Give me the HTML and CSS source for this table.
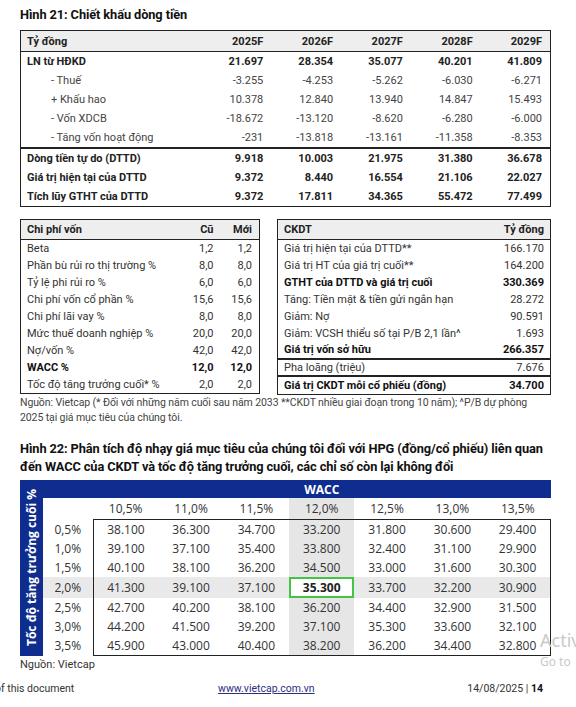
FILE: index.html
```html
<!DOCTYPE html>
<html>
<head>
<title>Hình 21 - Chiết khấu dòng tiền</title>
<link rel="stylesheet" href="styles.css">
</head>
<body>
<div class="page">
  <div class="fig-title">Hình 21: Chiết khấu dòng tiền</div>

  <table class="dcf">
    <colgroup><col class="c-name"><col><col><col><col><col></colgroup>
    <thead>
      <tr><th class="name">Tỷ đồng</th><th>2025F</th><th>2026F</th><th>2027F</th><th>2028F</th><th>2029F</th></tr>
    </thead>
    <tbody>
      <tr class="bold"><td class="name">LN từ HĐKD</td><td>21.697</td><td>28.354</td><td>35.077</td><td>40.201</td><td>41.809</td></tr>
      <tr class="sub"><td class="name">- Thuế</td><td>-3.255</td><td>-4.253</td><td>-5.262</td><td>-6.030</td><td>-6.271</td></tr>
      <tr class="sub"><td class="name">+ Khấu hao</td><td>10.378</td><td>12.840</td><td>13.940</td><td>14.847</td><td>15.493</td></tr>
      <tr class="sub"><td class="name">- Vốn XDCB</td><td>-18.672</td><td>-13.120</td><td>-8.620</td><td>-6.280</td><td>-6.000</td></tr>
      <tr class="sub"><td class="name">- Tăng vốn hoạt động</td><td>-231</td><td>-13.818</td><td>-13.161</td><td>-11.358</td><td>-8.353</td></tr>
      <tr class="bold rule-top"><td class="name">Dòng tiền tự do (DTTD)</td><td>9.918</td><td>10.003</td><td>21.975</td><td>31.380</td><td>36.678</td></tr>
      <tr class="bold"><td class="name">Giá trị hiện tại của DTTD</td><td>9.372</td><td>8.440</td><td>16.554</td><td>21.106</td><td>22.027</td></tr>
      <tr class="bold"><td class="name">Tích lũy GTHT của DTTD</td><td>9.372</td><td>17.811</td><td>34.365</td><td>55.472</td><td>77.499</td></tr>
    </tbody>
  </table>

  <div class="pair">
    <table class="small cap">
      <colgroup><col class="c-name"><col class="c-num"><col class="c-num"></colgroup>
      <thead>
        <tr><th class="name">Chi phí vốn</th><th>Cũ</th><th>Mới</th></tr>
      </thead>
      <tbody>
        <tr><td class="name">Beta</td><td>1,2</td><td>1,2</td></tr>
        <tr><td class="name">Phần bù rủi ro thị trường %</td><td>8,0</td><td>8,0</td></tr>
        <tr><td class="name">Tỷ lệ phi rủi ro %</td><td>6,0</td><td>6,0</td></tr>
        <tr><td class="name">Chi phí vốn cổ phần %</td><td>15,6</td><td>15,6</td></tr>
        <tr><td class="name">Chi phí lãi vay %</td><td>8,0</td><td>8,0</td></tr>
        <tr><td class="name">Mức thuế doanh nghiệp %</td><td>20,0</td><td>20,0</td></tr>
        <tr><td class="name">Nợ/vốn %</td><td>42,0</td><td>42,0</td></tr>
        <tr class="bold"><td class="name">WACC %</td><td>12,0</td><td>12,0</td></tr>
        <tr><td class="name">Tốc độ tăng trưởng cuối* %</td><td>2,0</td><td>2,0</td></tr>
      </tbody>
    </table>

    <table class="small dcf-sum">
      <colgroup><col class="c-name"><col class="c-num"></colgroup>
      <thead>
        <tr><th class="name">CKDT</th><th>Tỷ đồng</th></tr>
      </thead>
      <tbody>
        <tr><td class="name">Giá trị hiện tại của DTTD**</td><td>166.170</td></tr>
        <tr><td class="name">Giá trị HT của giá trị cuối**</td><td>164.200</td></tr>
        <tr class="bold"><td class="name">GTHT của DTTD và giá trị cuối</td><td>330.369</td></tr>
        <tr><td class="name">Tăng: Tiền mặt &amp; tiền gửi ngắn hạn</td><td>28.272</td></tr>
        <tr><td class="name">Giảm: Nợ</td><td>90.591</td></tr>
        <tr><td class="name">Giảm: VCSH thiểu số tại P/B 2,1 lần^</td><td>1.693</td></tr>
        <tr class="bold rule-bottom"><td class="name">Giá trị vốn sở hữu</td><td>266.357</td></tr>
        <tr class="rule-bottom"><td class="name">Pha loãng (triệu)</td><td>7.676</td></tr>
        <tr class="bold"><td class="name">Giá trị CKDT mỗi cổ phiếu (đồng)</td><td>34.700</td></tr>
      </tbody>
    </table>
  </div>

  <p class="note">Nguồn: Vietcap (* Đối với những năm cuối sau năm 2033 **CKDT nhiều giai đoạn trong 10 năm); ^P/B dự phòng<br>2025 tại giá mục tiêu của chúng tôi.</p>

  <div class="fig-title fig-22">Hình 22: Phân tích độ nhạy giá mục tiêu của chúng tôi đối với HPG (đồng/cổ phiếu) liên quan<br>đến WACC của CKDT và tốc độ tăng trưởng cuối, các chỉ số còn lại không đổi</div>

  <div class="sens">
    <div class="axis"><span>Tốc độ tăng trưởng cuối %</span></div>
    <table class="grid">
      <colgroup><col class="c-row"><col><col><col><col><col><col><col></colgroup>
      <tr class="bar"><td></td><td colspan="7">WACC</td></tr>
      <tr class="head"><td></td><td>10,5%</td><td>11,0%</td><td>11,5%</td><td class="mid">12,0%</td><td>12,5%</td><td>13,0%</td><td>13,5%</td></tr>
      <tr class="data first"><td>0,5%</td><td>38.100</td><td>36.300</td><td>34.700</td><td class="mid">33.200</td><td>31.800</td><td>30.600</td><td>29.400</td></tr>
      <tr class="data"><td>1,0%</td><td>39.100</td><td>37.100</td><td>35.400</td><td class="mid">33.800</td><td>32.400</td><td>31.100</td><td>29.900</td></tr>
      <tr class="data"><td>1,5%</td><td>40.100</td><td>38.100</td><td>36.200</td><td class="mid">34.500</td><td>33.000</td><td>31.600</td><td>30.300</td></tr>
      <tr class="data base"><td>2,0%</td><td>41.300</td><td>39.100</td><td>37.100</td><td class="mid pick">35.300</td><td>33.700</td><td>32.200</td><td>30.900</td></tr>
      <tr class="data"><td>2,5%</td><td>42.700</td><td>40.200</td><td>38.100</td><td class="mid">36.200</td><td>34.400</td><td>32.900</td><td>31.500</td></tr>
      <tr class="data"><td>3,0%</td><td>44.200</td><td>41.500</td><td>39.200</td><td class="mid">37.100</td><td>35.300</td><td>33.600</td><td>32.100</td></tr>
      <tr class="data last"><td>3,5%</td><td>45.900</td><td>43.000</td><td>40.400</td><td class="mid">38.200</td><td>36.200</td><td>34.400</td><td>32.800</td></tr>
    </table>
  </div>

  <p class="source">Nguồn: Vietcap</p>

  <div class="footer">
    <span class="f-left">of this document</span>
    <a class="f-link" href="#">www.vietcap.com.vn</a>
    <span class="f-right">14/08/2025 | <b>14</b></span>
  </div>
</div>

<div class="activate">
  <div class="act-big">Activ</div>
  <div class="act-small">Go to</div>
</div>
</body>
</html>
```

FILE: styles.css
```css
html, body {
  margin: 0;
  overflow: hidden;
  background-color: white;
}
body {
  font-family: Roboto, "Liberation Sans", sans-serif;
  color: #222;
  position: relative;
  width: 576px;
  height: 707px;
}
.page {
  padding: 6px 0 0 20px;
  width: 531px;
}
.fig-title {
  font-size: 12.8px;
  font-weight: bold;
  line-height: 18px;
  white-space: nowrap;
  color: #111;
  letter-spacing: -0.1px;
}
table {
  border-collapse: collapse;
  table-layout: fixed;
}
th, td {
  padding: 0 8px 0 0;
  text-align: right;
  white-space: nowrap;
}
th {
  background-color: #eeeeee;
  font-weight: bold;
  border-bottom: 1px solid #222;
}
.name {
  text-align: left;
  padding-left: 6px;
}
.bold td {
  font-weight: bold;
}

/* Hinh 21 main table */
.dcf {
  width: 531px;
  margin-top: 6px;
  border: 1px solid #222;
  font-size: 11px;
}
.dcf .c-name { width: 181px; }
.dcf th { height: 20px; }
.dcf td { height: 19px; }
.dcf .sub td {
  color: #444;
}
.dcf .sub .name {
  padding-left: 30px;
}
.rule-top td {
  border-top: 2px solid #222;
}

/* cost of capital + dcf summary */
.pair {
  display: flex;
  gap: 17px;
  margin-top: 12px;
  align-items: flex-start;
}
.small {
  border: 1px solid #222;
  font-size: 11px;
}
.small th { height: 19px; }
.small td { height: 17px; color: #333; }
.small .bold td { color: #111; }
.cap { width: 240px; }
.cap .c-num { width: 39px; }
.cap th, .cap td { padding-right: 7px; }
.dcf-sum { width: 274px; }
.dcf-sum .c-num { width: 80px; }
.dcf-sum th, .dcf-sum td { padding-right: 6px; }
.rule-bottom td {
  border-bottom: 2px solid #222;
  height: 15.5px;
}

.note {
  margin: 0;
  font-size: 10.5px;
  line-height: 15px;
  color: #444;
  letter-spacing: -0.1px;
  white-space: nowrap;
}
.fig-22 {
  margin-top: 15px;
}

/* sensitivity table */
.sens {
  display: flex;
  margin-top: 4px;
  font-family: "Open Sans", "Noto Sans", sans-serif;
}
.axis {
  width: 23px;
  background-color: #0e2d8e;
  display: flex;
  align-items: center;
  justify-content: center;
}
.axis span {
  writing-mode: vertical-rl;
  transform: rotate(180deg);
  color: white;
  font-weight: bold;
  font-size: 12px;
  white-space: nowrap;
}
.grid {
  width: 508px;
  font-size: 12px;
  color: #333;
}
.grid .c-row { width: 50px; }
.grid td {
  text-align: center;
  padding: 0;
  height: 19px;
}
.grid .bar td {
  background-color: #0e2d8e;
  color: white;
  font-weight: bold;
  height: 18px;
}
.grid .head td {
  height: 21px;
}
.grid .mid {
  background-color: #e6e6e6;
}
.grid .data td:nth-child(2) { border-left: 1px solid #222; }
.grid .data td:last-child { border-right: 1px solid #222; }
.grid .first td:not(:first-child) { border-top: 1px solid #222; }
.grid .last td:not(:first-child) { border-bottom: 1px solid #222; }
.grid .base td {
  background-color: #e9e9e9;
  height: 21px;
}
.grid .base td.pick {
  background-color: white;
  font-weight: bold;
  color: #222;
  box-shadow: inset 0 0 0 2px #43c443;
}

.source {
  margin: 2px 0 0 0;
  font-size: 11px;
  line-height: 14px;
  color: #333;
}
.footer {
  display: flex;
  margin-top: 10px;
  font-size: 10.5px;
  line-height: 14px;
  color: #333;
}
.f-left {
  margin-left: -25px;
  width: 223px;
}
.f-link {
  color: #2c2f7e;
}
.f-right {
  flex: 1;
  text-align: right;
  padding-right: 8px;
}
.f-right b {
  color: #111;
}

/* windows watermark, over the page */
.activate {
  position: absolute;
  left: 540px;
  top: 628px;
  color: #c9c9c9;
  font-family: "Noto Sans", sans-serif;
  white-space: nowrap;
}
.act-big {
  font-size: 18px;
  line-height: 24px;
}
.act-small {
  margin-top: 3px;
  font-size: 12px;
  line-height: 14px;
}
```
